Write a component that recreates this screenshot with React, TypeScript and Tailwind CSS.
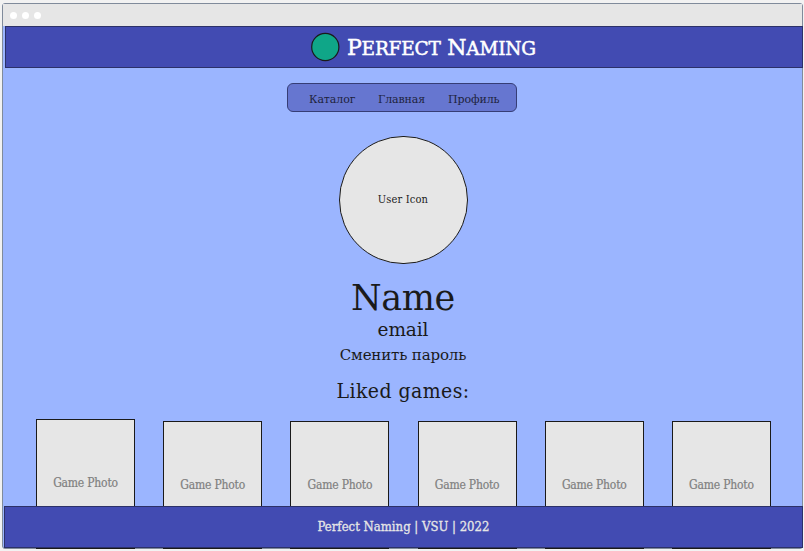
const condensed = "font-['Roboto_Slab','DejaVu_Serif_Condensed','DejaVu_Serif',serif]";
const wide = "font-['Roboto_Slab','DejaVu_Serif',serif]";

const games = [
  { id: 1, offset: '' },
  { id: 2, offset: 'mt-[2px]' },
  { id: 3, offset: 'mt-[2px]' },
  { id: 4, offset: 'mt-[2px]' },
  { id: 5, offset: 'mt-[2px]' },
  { id: 6, offset: 'mt-[2px]' },
];

function TitleBar() {
  return (
    <div className="flex h-[22px] shrink-0 items-center gap-[5px] bg-[#e6e6e6] pl-[7px]">
      <span className="size-[7px] rounded-full bg-white" />
      <span className="size-[7px] rounded-full bg-white" />
      <span className="size-[7px] rounded-full bg-white" />
    </div>
  );
}

function Header() {
  return (
    <header className="-mr-px ml-[2px] flex h-[42px] shrink-0 items-center border border-[#2c3168] bg-[#424bb2] pl-[304px]">
      <svg className="size-[30px] shrink-0" viewBox="0 0 30 30">
        <circle cx="15.3" cy="15" r="13.6" fill="#0fa688" stroke="#1a1a1a" strokeWidth="1.2" />
      </svg>
      <h1 className={`${wide} ml-[7px] whitespace-nowrap pt-[2px] text-[22px] leading-none tracking-[-0.22px] text-white [-webkit-text-stroke:0.5px_white]`}>
        P<span className="text-[18.5px]">ERFECT</span> N<span className="text-[18.5px]">AMING</span>
      </h1>
    </header>
  );
}

function Nav() {
  return (
    <nav className={`${wide} ml-[284px] mt-[15px] flex h-[29px] w-[230px] shrink-0 items-center gap-[23px] rounded-[6px] border border-[#363d75] bg-[#6676d0] pl-[21px] pt-[5px] text-[11px] tracking-[-0.1px] text-[#20233c]`}>
      <a className="w-[46px] whitespace-nowrap">Каталог</a>
      <a className="w-[47px] whitespace-nowrap">Главная</a>
      <a className="w-[51px] whitespace-nowrap">Профиль</a>
    </nav>
  );
}

function Profile() {
  return (
    <section className="flex flex-col items-center pl-px text-[#1a1a1a]">
      <div className="mt-[24px] flex h-[128px] w-[129px] items-center justify-center rounded-full border border-[#1a1a1a] bg-[#e6e6e6] pt-px text-[11px] tracking-[0.15px]">
        User Icon
      </div>
      <h2 className={`${wide} mt-[12px] h-[43px] text-[35px] leading-[44px] tracking-[-0.4px]`}>Name</h2>
      <p className={`${wide} mt-px h-[20px] text-[18.5px] leading-[20px] tracking-[-0.1px]`}>email</p>
      <a className={`${wide} mt-[5px] h-[20px] text-[15px] leading-[20px] tracking-[-0.15px]`}>Сменить пароль</a>
      <h3 className="mt-[12px] h-[28px] text-[21px] leading-[28px] tracking-[0.45px]">Liked games:</h3>
    </section>
  );
}

export default function App() {
  return (
    <div className={`${condensed} h-[551px] w-[804px] overflow-hidden bg-[#f2f2f2] pl-[2px] pt-[3px]`}>
      <div className="flex h-[546px] w-[801px] flex-col rounded-[3px] border border-[#808b9b] bg-[#9bb5ff]">
        <TitleBar />
        <Header />
        <Nav />
        <Profile />
        <div className="ml-[33px] mt-[14px] flex h-[130px] shrink-0 gap-[28.2px]">
          {games.map((game) => (
            <div
              key={game.id}
              className={`${game.offset} flex w-[99px] shrink-0 justify-center border border-[#1a1a1a] bg-[#e6e6e6] pt-[54px] text-[12px] tracking-[-0.2px] text-[#808080] [-webkit-text-stroke:0.2px_#808080]`}
            >
              <span className="whitespace-nowrap">Game Photo</span>
            </div>
          ))}
        </div>
        <footer className="relative -mr-px ml-px mt-[-43px] flex h-[42px] shrink-0 items-center justify-center border border-[#2c3168] bg-[#424bb2] text-[13px] text-[#e6e6e6] [-webkit-text-stroke:0.3px_#e6e6e6]">
          Perfect Naming | VSU | 2022
        </footer>
      </div>
    </div>
  );
}
